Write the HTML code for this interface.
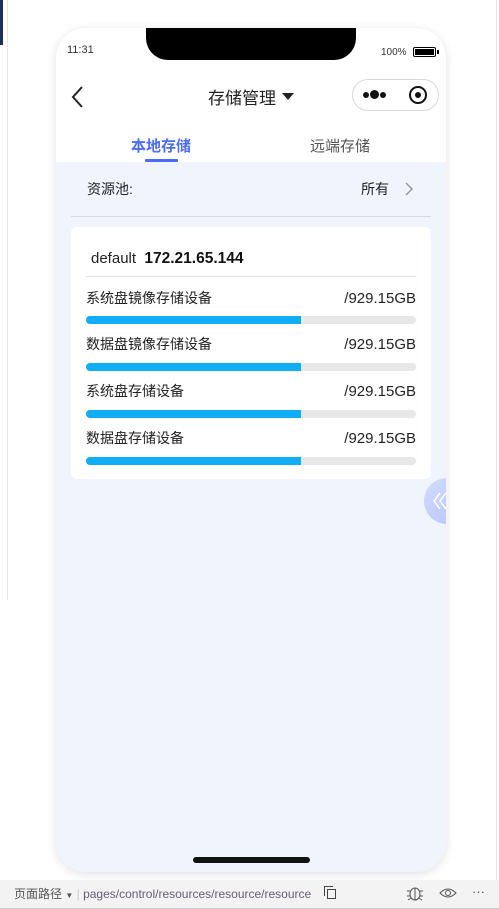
<!DOCTYPE html>
<html><head><meta charset="utf-8"><style>
*{margin:0;padding:0;box-sizing:border-box}
body{width:499px;height:909px;background:#fff;position:relative;overflow:hidden;font-family:"Liberation Sans","Noto Sans CJK SC",sans-serif;color:#222}
.abs{position:absolute}
.phone{left:56px;top:28px;width:390px;height:844px;border-radius:30px;background:#f0f4fc;overflow:hidden;box-shadow:0 2px 10px rgba(0,0,0,.12)}
.top{left:0;top:0;width:390px;height:134px;background:#fff}
.notch{left:90px;top:0;width:210px;height:32px;background:#000;border-radius:0 0 22px 22px}
.t{white-space:nowrap}
.v{right:15px;font-size:15px}
.bar{left:30px;width:330px;height:8px;border-radius:4px;background:#e8e8e8;overflow:hidden}
.bar i{display:block;width:215px;height:8px;background:#10aef7}
</style></head><body>
<div class="abs" style="left:0;top:0;width:3px;height:45px;background:#1e2e62"></div>
<div class="abs" style="left:7px;top:0;width:1px;height:600px;background:#e6e6e6"></div>
<div class="abs" style="left:496px;top:0;width:1px;height:880px;background:#e6e6e6"></div>
<div class="abs phone">
 <div class="abs top"></div>
 <div class="abs notch"></div>
 <div class="abs t" style="left:11px;top:16px;font-size:11px;color:#333">11:31</div>
 <div class="abs t" style="left:325px;top:19px;font-size:10px;color:#333">100%</div>
 <div class="abs" style="left:357px;top:19px;width:23px;height:10px;border:1.5px solid #000;border-radius:2px;padding:1px"><div style="width:100%;height:100%;background:#000"></div></div>
 <div class="abs" style="left:381px;top:22px;width:2px;height:4px;background:#000"></div>
 <svg class="abs" style="left:14px;top:57px" width="16" height="24"><path d="M12 2 L3 12 L12 22" fill="none" stroke="#222" stroke-width="2"/></svg>
 <div class="abs t" style="left:152px;top:56px;font-size:17px;color:#222">存储管理</div>
 <svg class="abs" style="left:226px;top:65px" width="12" height="8"><path d="M0 0H12L6 7Z" fill="#222"/></svg>
 <div class="abs" style="left:296px;top:51px;width:87px;height:32px;border:1px solid #d8d8d8;border-radius:16px;background:#fff"></div>
 <div class="abs" style="left:307px;top:64px;width:6px;height:6px;border-radius:50%;background:#111"></div>
 <div class="abs" style="left:314px;top:62px;width:9px;height:9px;border-radius:50%;background:#111"></div>
 <div class="abs" style="left:324px;top:64px;width:6px;height:6px;border-radius:50%;background:#111"></div>
 <div class="abs" style="left:353px;top:58px;width:18px;height:18px;border:2.5px solid #111;border-radius:50%"></div>
 <div class="abs" style="left:359px;top:64px;width:6px;height:6px;border-radius:50%;background:#111"></div>
 <div class="abs t" style="left:75px;top:107px;font-size:15px;font-weight:bold;color:#4a6cf7">本地存储</div>
 <div class="abs" style="left:89px;top:131px;width:33px;height:3px;background:#4a6cf7;border-radius:1px"></div>
 <div class="abs t" style="left:254px;top:107px;font-size:15px;color:#555">远端存储</div>
 <div class="abs t" style="left:31px;top:151px;font-size:14px;color:#222">资源池:</div>
 <div class="abs t" style="left:305px;top:151px;font-size:14px;color:#222">所有</div>
 <svg class="abs" style="left:348px;top:153px" width="10" height="16"><path d="M2 2L8 8L2 14" fill="none" stroke="#999" stroke-width="1.5"/></svg>
 <div class="abs" style="left:15px;top:188px;width:360px;height:1px;background:#d4d8e4"></div>
 <div class="abs" style="left:15px;top:199px;width:360px;height:252px;background:#fff;border-radius:6px">
  <div class="abs t" style="left:20px;top:23px;font-size:15px;color:#222">default&nbsp; <b style="color:#111;font-size:15.5px">172.21.65.144</b></div>
  <div class="abs" style="left:15px;top:49px;width:330px;height:1px;background:#e2e2e2"></div>
  <div class="abs t" style="left:15px;top:61px;font-size:14px">系统盘镜像存储设备</div>
  <div class="abs t v" style="top:63px">/929.15GB</div>
  <div class="abs bar" style="left:15px;top:89px"><i></i></div>
  <div class="abs t" style="left:15px;top:107px;font-size:14px">数据盘镜像存储设备</div>
  <div class="abs t v" style="top:109px">/929.15GB</div>
  <div class="abs bar" style="left:15px;top:136px"><i></i></div>
  <div class="abs t" style="left:15px;top:154px;font-size:14px">系统盘存储设备</div>
  <div class="abs t v" style="top:156px">/929.15GB</div>
  <div class="abs bar" style="left:15px;top:183px"><i></i></div>
  <div class="abs t" style="left:15px;top:201px;font-size:14px">数据盘存储设备</div>
  <div class="abs t v" style="top:203px">/929.15GB</div>
  <div class="abs bar" style="left:15px;top:230px"><i></i></div>
 </div>
 <div class="abs" style="left:368px;top:450px;width:46px;height:46px;border-radius:50%;background:linear-gradient(135deg,#d4dcfc,#b4c2fb)"></div>
 <svg class="abs" style="left:376px;top:462px" width="20" height="22"><path d="M8 3L2 11L8 19M14 3L8 11L14 19" fill="none" stroke="#fff" stroke-width="1.5"/></svg>
 <div class="abs" style="left:137px;top:829px;width:117px;height:6px;border-radius:3px;background:#111"></div>
</div>
<div class="abs" style="left:0;top:880px;width:499px;height:29px;background:#f3f3f3;border-bottom:1px solid #ccc"></div>
<div class="abs t" style="left:14px;top:885px;font-size:12px;color:#555">页面路径 <span style="font-size:8px">▼</span> <span style="color:#ccc">|</span> <span style="color:#6a5a7a">pages/control/resources/resource/resource</span></div>
<div class="abs" style="left:327px;top:889px;width:9px;height:10px;border:1px solid #444"></div>
<div class="abs" style="left:324px;top:886px;width:9px;height:10px;border-left:1px solid #444;border-top:1px solid #444"></div>
<svg class="abs" style="left:406px;top:884px" width="18" height="18"><ellipse cx="9" cy="10" rx="5" ry="6" fill="none" stroke="#555"/><path d="M9 4V16M1 7H4M14 7H17M1 12H4M14 12H17M2 16L5 14M16 16L13 14" stroke="#555" fill="none"/></svg>
<svg class="abs" style="left:439px;top:886px" width="18" height="14"><path d="M1 7Q9 -1 17 7Q9 15 1 7Z" fill="none" stroke="#555"/><circle cx="9" cy="7" r="2.5" fill="none" stroke="#555"/></svg>
<div class="abs t" style="left:472px;top:884px;font-size:13px;color:#555">···</div>
</body></html>
